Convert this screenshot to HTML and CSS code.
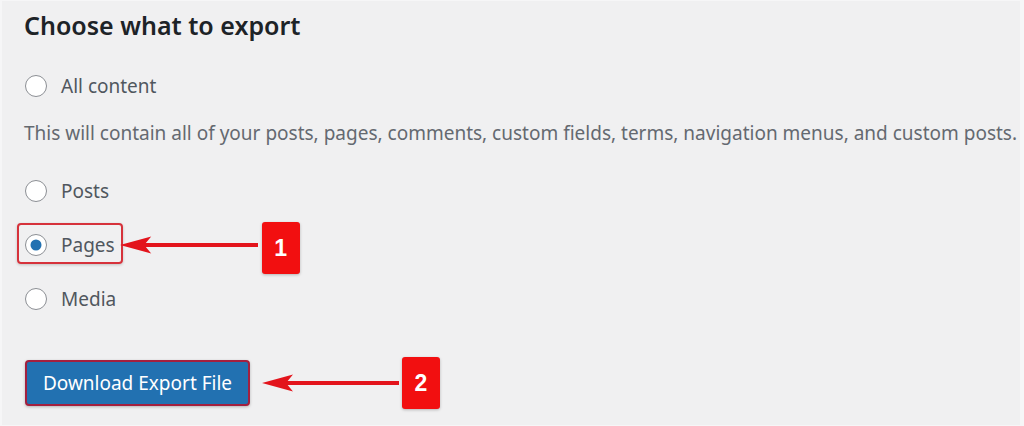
FILE: index.html
```html
<!DOCTYPE html>
<html lang="en">

<head>
    <meta charset="UTF-8">
    <title>Export</title>
    <link rel="stylesheet" href="styles.css">
</head>

<body>
    <div class="export-wrap">
        <h2 class="export-title">Choose what to export</h2>
        <div class="export-row first">
            <label><input type="radio" name="content"><span>All content</span></label>
        </div>
        <p class="export-desc">This will contain all of your posts, pages, comments, custom fields, terms, navigation menus, and custom posts.</p>
        <div class="export-row after-desc">
            <label><input type="radio" name="content"><span>Posts</span></label>
        </div>
        <div class="export-row">
            <label class="marked"><input type="radio" name="content" checked><span>Pages</span></label>
            <svg class="arrow arrow-1" width="138" height="20" viewBox="0 0 137 20" preserveAspectRatio="none">
                <rect x="22" y="8" width="115" height="4" fill="#e3141c"/>
                <path d="M0 10 L31 1.5 L24 10 L31 18.5 Z" fill="#e3141c"/>
            </svg>
            <span class="badge">1</span>
        </div>
        <div class="export-row">
            <label><input type="radio" name="content"><span>Media</span></label>
        </div>
        <div class="export-submit">
            <button class="export-btn" type="button">Download Export File</button>
            <svg class="arrow arrow-2" width="137" height="20" viewBox="0 0 137 20">
                <rect x="22" y="8" width="115" height="4" fill="#e3141c"/>
                <path d="M0 10 L31 1.5 L24 10 L31 18.5 Z" fill="#e3141c"/>
            </svg>
            <span class="badge">2</span>
        </div>
    </div>
</body>

</html>
```

FILE: styles.css
```css
body,
div,
h2,
p,
label,
button {
    padding: 0;
    margin: 0;
}

body {
    background: #f0f0f1;
    font-family: "Noto Sans", "Open Sans", sans-serif;
    color: #50575e;
}

.export-wrap {
    height: 424px;
    padding-left: 22px;
    border: 1px solid #f6f6f7;
    border-left-width: 2px;
    border-right-width: 4px;
}

.export-title {
    padding-top: 8px;
    font-size: 25px;
    line-height: 32px;
    font-weight: 600;
    color: #1d2327;
}

.export-row {
    display: flex;
    align-items: center;
    height: 24px;
    margin-top: 30px;
}

.export-row.first {
    margin-top: 33px;
}

.export-row.after-desc {
    margin-top: 34px;
}

.export-row label {
    display: flex;
    align-items: center;
    font-size: 19px;
    line-height: 24px;
}

.export-row input {
    appearance: none;
    width: 22px;
    height: 22px;
    margin: 0 14px 0 1px;
    border: 1.5px solid #8c8f94;
    border-radius: 50%;
    background: #fff;
    position: relative;
}

.export-row input:checked::after {
    content: "";
    position: absolute;
    top: 50%;
    left: 50%;
    width: 11px;
    height: 11px;
    transform: translate(-50%, -50%);
    border-radius: 50%;
    background: #2271b1;
}

.export-row label.marked {
    padding: 8px 6px 5px 5px;
    margin: -10px -8px -7px -7px;
    border: 2px solid #d6323b;
    border-radius: 4px;
    box-shadow: 0 1px 3px rgba(0, 0, 0, 0.2);
}

.export-desc {
    margin-top: 23px;
    font-size: 19px;
    line-height: 24px;
    color: #646970;
    white-space: nowrap;
}

.arrow-1 {
    margin-left: 5px;
}

.badge {
    display: flex;
    align-items: center;
    justify-content: center;
    width: 38px;
    height: 52px;
    margin: -11px 0 -17px 4px;
    background: #f20f10;
    border-radius: 3px;
    box-shadow: 0 1px 3px rgba(0, 0, 0, 0.25);
    color: #fff;
    font-family: "Liberation Sans", Arial, sans-serif;
    font-weight: 700;
    font-size: 23px;
}

.export-submit {
    display: flex;
    align-items: center;
    margin-top: 46px;
}

.export-submit .badge {
    margin: 0 0 0 3px;
}

.export-btn {
    width: 225px;
    height: 46px;
    margin-left: 1px;
    background: #2271b1;
    border: 2px solid #a3203f;
    border-radius: 4px;
    box-shadow: 0 1px 3px rgba(0, 0, 0, 0.25);
    color: #fff;
    font-family: "Noto Sans", "Open Sans", sans-serif;
    font-size: 19px;
}

.arrow-2 {
    margin-left: 12px;
}
```
